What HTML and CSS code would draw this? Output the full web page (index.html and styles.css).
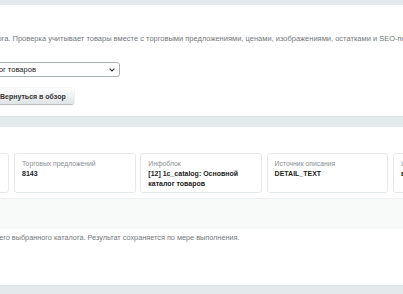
FILE: index.html
```html
<!DOCTYPE html>
<html lang="ru">
<head>
    <meta charset="UTF-8">
    <meta name="viewport" content="width=device-width, initial-scale=1.0">
    <title>Проверка каталога</title>
    <link rel="stylesheet" href="styles.css">
</head>
<body>
    <!-- Выбор каталога -->
    <div class="panel panel-top">
        <p class="hint hint-top">каталога. Проверка учитывает товары вместе с торговыми предложениями, ценами, изображениями, остатками и SEO-полями.</p>
        <div class="select-box">
            <span class="select-text">каталог товаров</span>
            <svg class="select-arrow" width="6" height="4" viewBox="0 0 6 4"><path d="M0.6 0.6 L3 3 L5.4 0.6" fill="none" stroke="#333" stroke-width="1.2"/></svg>
        </div>
        <button class="btn">Вернуться в обзор</button>
    </div>

    <!-- Сводка -->
    <div class="panel panel-stats">
        <div class="cards">
            <div class="card">
                <div class="card-label">Товаров</div>
                <div class="card-value">4120</div>
            </div>
            <div class="card">
                <div class="card-label">Торговых предложений</div>
                <div class="card-value">8143</div>
            </div>
            <div class="card">
                <div class="card-label">Инфоблок</div>
                <div class="card-value">[12] 1c_catalog: Основной каталог товаров</div>
            </div>
            <div class="card">
                <div class="card-label">Источник описания</div>
                <div class="card-value">DETAIL_TEXT</div>
            </div>
            <div class="card">
                <div class="card-label">Цены</div>
                <div class="card-value">выгружаются</div>
            </div>
        </div>
        <div class="strip"></div>
        <p class="hint hint-bottom">текущего выбранного каталога. Результат сохраняется по мере выполнения.</p>
    </div>
</body>
</html>
```

FILE: styles.css
```css
html, body {
    margin: 0;
    padding: 0;
}
body {
    background-color: #e4e9eb;
    font-family: "Liberation Sans", Arial, sans-serif;
    overflow: hidden;
    height: 294px;
}
.panel {
    background: #fff;
    border-bottom: 1px solid #dde2e4;
    box-sizing: border-box;
}
.panel-top {
    margin-top: 5px;
    height: 112px;
    padding-top: 29px;
}
.panel-stats {
    margin-top: 10px;
    height: 159px;
    padding-top: 26px;
}
.hint {
    margin: 0;
    font-size: 7.3px;
    line-height: 10px;
    color: #74787c;
    white-space: nowrap;
}
.hint-top {
    font-size: 7.5px;
    margin-left: -22px;
}
.select-box {
    display: flex;
    align-items: center;
    justify-content: space-between;
    box-sizing: border-box;
    margin-top: 18px;
    margin-left: -26px;
    width: 146px;
    height: 15px;
    padding: 0 4px;
    border: 1px solid #a9b0b4;
    border-radius: 3px;
    background: #fff;
}
.select-text {
    font-size: 7.6px;
    color: #222;
}
.btn {
    display: block;
    margin-top: 11px;
    margin-left: -8px;
    height: 16px;
    padding: 0 8px;
    font-family: "Liberation Sans", Arial, sans-serif;
    font-size: 7px;
    font-weight: bold;
    color: #333;
    border: none;
    border-radius: 3px;
    background: linear-gradient(#ffffff, #dfe4e6);
    box-shadow: 0 1px 1px rgba(0, 0, 0, 0.25), 0 0 0 1px rgba(0, 0, 0, 0.04);
}
.cards {
    display: flex;
    gap: 4.8px;
    margin-left: -112.3px;
}
.card {
    flex: 0 0 121.5px;
    box-sizing: border-box;
    height: 40px;
    padding: 5px 7px;
    border: 1px solid #e6e9eb;
    border-radius: 3px;
    background: #fff;
}
.card-label {
    font-size: 6.8px;
    line-height: 9px;
    color: #8a8e92;
}
.card-value {
    margin-top: 1px;
    font-size: 7px;
    line-height: 10px;
    font-weight: bold;
    color: #222;
}
.strip {
    margin-top: 5px;
    height: 31px;
    background: #f8f9f9;
    border-top: 1px solid #eef0f1;
    box-sizing: border-box;
}
.hint-bottom {
    margin-top: 4px;
    margin-left: -21px;
}
```
